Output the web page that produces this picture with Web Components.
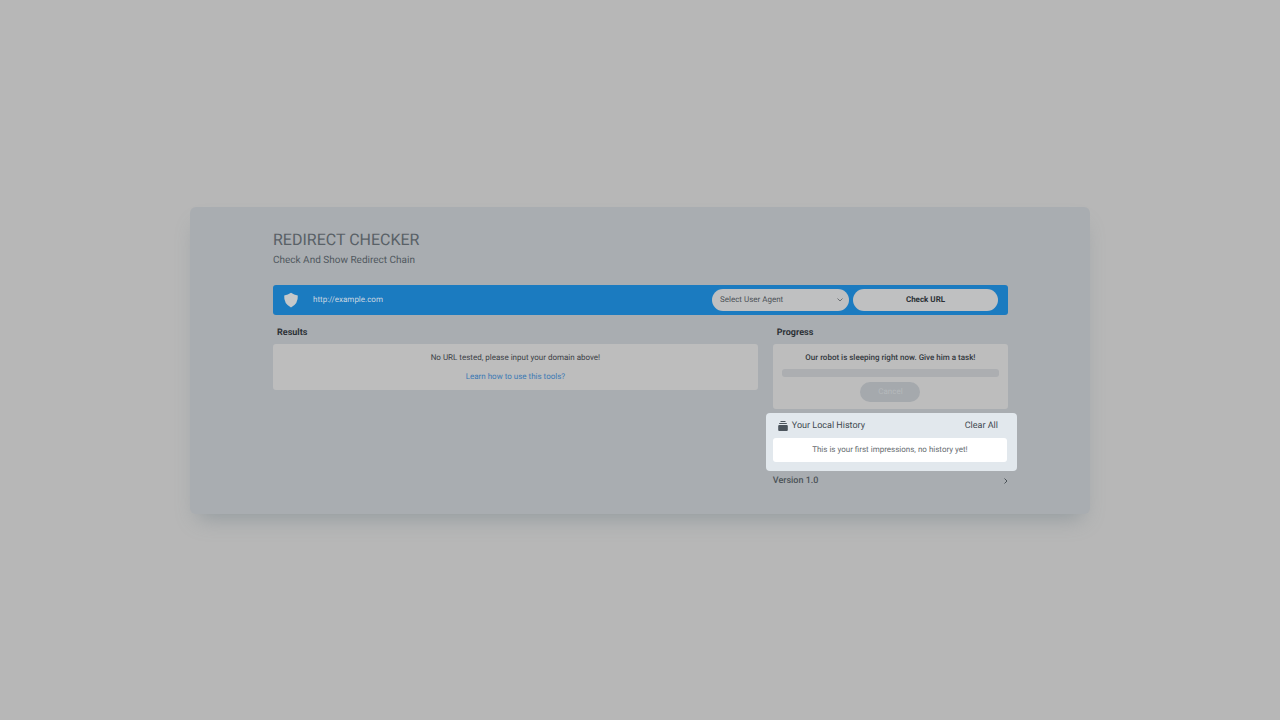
<!DOCTYPE html>
<html lang="en">
<head>
<meta charset="utf-8">
<meta name="viewport" content="width=device-width, initial-scale=1">
<title>Redirect Checker</title>
<style>
body {
  margin: 0;
  min-height: 100vh;
  display: grid;
  align-items: center;
  background: #b7b7b7;
  color: #3c4146;
  font: 8px/12px Roboto, sans-serif;
  text-rendering: geometricPrecision;
}
</style>
</head>
<body>
<redirect-checker></redirect-checker>

<script>
class BaseElement extends HTMLElement {
  constructor() {
    super();
    this.attachShadow({ mode: 'open' });
    this.shadowRoot.innerHTML = `<style>* { box-sizing: border-box; }${this.constructor.css}</style>${this.constructor.html}`;
  }
}

class UrlBar extends BaseElement {
  static css = `
:host {
  display: block;
}
form {
  display: flex;
  align-items: center;
  gap: 4px;
  height: 30px;
  padding: 0 10px;
  border-radius: 3px;
  background: #1b7bc0;
}
.url {
  flex: 1;
  display: flex;
  align-items: center;
  gap: 14px;
}
svg {
  display: block;
}
input, select, button {
  margin: 0;
  border: 0;
  outline: 0;
  font: inherit;
  text-rendering: inherit;
}
input {
  flex: 1;
  padding: 0;
  background: none;
  color: #c9d6e0;
}
input::placeholder {
  color: #c9d6e0;
}
.agent {
  position: relative;
  width: 137px;
}
.agent svg {
  position: absolute;
  right: 6px;
  top: 8px;
  pointer-events: none;
}
select, button {
  display: block;
  width: 100%;
  height: 22px;
  border-radius: 11px;
  background: #bfc0c1;
}
select {
  appearance: none;
  padding: 0 8px;
  color: #4d5257;
}
button {
  width: 145px;
  color: #2b3036;
  font-weight: 700;
}`;
  static html = `
<form onsubmit="return false">
  <label class="url">
    <svg width="16" height="16" viewBox="0 0 16 16" aria-hidden="true"><path d="M8 .8Q11 3 14.800 3.400Q15.400 11.500 8 15.400Q.6 11.500 1.200 3.400Q5 3 8 .8Z" fill="#c5c8ca"/></svg>
    <input type="text" placeholder="http://example.com" aria-label="URL" spellcheck="false">
  </label>
  <div class="agent">
    <select aria-label="User agent"><option>Select User Agent</option></select>
    <svg width="6" height="6" viewBox="0 0 6 6" aria-hidden="true"><path d="M.5 1.500L3 4L5.500 1.500" fill="none" stroke="#555a5f" stroke-width=".8"/></svg>
  </div>
  <button type="submit">Check URL</button>
</form>`;
}
customElements.define('url-bar', UrlBar);

class TitledCard extends BaseElement {
  static css = `
:host {
  display: block;
}
h2 {
  margin: 0 0 4px;
  padding: 0 4px;
  color: #2d3237;
  font-size: 9px;
  line-height: 14px;
  font-weight: 700;
}
.card {
  padding: 8px 9px 7px;
  border-radius: 3px;
  background: #bdbdbd;
  text-align: center;
}`;
  static html = `
<h2><slot name="title"></slot></h2>
<div class="card"><slot></slot></div>`;
}
customElements.define('titled-card', TitledCard);

class TaskProgress extends BaseElement {
  static css = `
:host {
  display: grid;
  justify-items: center;
}
p {
  margin: 0 0 5px;
  font-weight: 500;
  color: #33383d;
}
progress {
  appearance: none;
  display: block;
  width: 100%;
  height: 8px;
  margin-bottom: 5px;
  border: 0;
  border-radius: 3px;
  overflow: hidden;
}
progress::-webkit-progress-bar {
  background: #acaeb1;
}
progress::-webkit-progress-value {
  background: #1b7bc0;
}
button {
  width: 60px;
  height: 20px;
  padding: 0;
  border: 0;
  border-radius: 10px;
  background: #a5a9ad;
  color: #b5b9bc;
  font: inherit;
  text-rendering: inherit;
}`;
  static html = `
<p id="status">Our robot is sleeping right now. Give him a task!</p>
<progress value="0" max="100" aria-labelledby="status"></progress>
<button type="button" disabled>Cancel</button>`;
}
customElements.define('task-progress', TaskProgress);

class LocalHistory extends BaseElement {
  static css = `
:host {
  display: block;
  padding: 6px 10px 9px 7px;
  border-radius: 4px;
  background: #e2e8ed;
}
header {
  display: flex;
  align-items: center;
  gap: 4px;
  margin-bottom: 5px;
  padding: 0 9px 0 5px;
  color: #3f484f;
}
h2 {
  flex: 1;
  margin: 0;
  font-size: 9px;
  line-height: 14px;
  font-weight: 400;
}
button {
  padding: 0;
  border: 0;
  background: none;
  color: inherit;
  font: inherit;
  font-size: 9px;
  line-height: 14px;
  text-rendering: inherit;
}
.card {
  padding: 6px;
  border-radius: 3px;
  background: #ffffff;
  color: #666b70;
  text-align: center;
}`;
  static html = `
<header>
  <svg width="10" height="10" viewBox="0 0 10 10" fill="#4c555d" aria-hidden="true"><path d="M2.500 0H7.500V1H2.500ZM1.200 1.900H8.800V3.100H1.200ZM1.200 4H8.800Q9.800 4 9.800 5V9Q9.800 10 8.800 10H1.200Q.2 10 .2 9V5Q.2 4 1.200 4Z"/></svg>
  <h2>Your Local History</h2>
  <button type="button">Clear All</button>
</header>
<div class="card"><slot></slot></div>`;
}
customElements.define('local-history', LocalHistory);

class RedirectChecker extends BaseElement {
  static css = `
:host {
  display: block;
  width: 100%;
  max-width: 900px;
  margin: 0 auto;
  padding: 24px 82px 26px 83px;
  box-sizing: border-box;
  border-radius: 6px;
  background: #a9adb1;
  box-shadow: 0 12px 20px -8px #929a9e;
}
h1 {
  margin: 0;
  color: #596167;
  font-size: 16px;
  line-height: 18px;
  font-weight: 400;
}
.subtitle {
  margin: 5px 0 17px;
  color: #50585e;
  font-size: 10px;
  line-height: 14px;
}
.columns {
  display: grid;
  grid-template-columns: 1fr 32%;
  align-items: start;
  gap: 15px;
  margin-top: 11px;
}
.results {
  display: grid;
  gap: 7px;
}
a {
  color: #3b79b4;
  text-decoration: none;
}
local-history {
  margin: 4px -9px 3px -7px;
}
.version {
  display: flex;
  align-items: center;
  justify-content: space-between;
  width: 100%;
  padding: 0;
  border: 0;
  background: none;
  color: #4c5358;
  font: inherit;
  font-size: 9px;
  font-weight: 500;
  line-height: 14px;
  text-rendering: inherit;
}`;
  static html = `
<h1>REDIRECT CHECKER</h1>
<p class="subtitle">Check And Show Redirect Chain</p>
<url-bar></url-bar>
<div class="columns">
  <titled-card>
    <span slot="title">Results</span>
    <div class="results">
      <span>No URL tested, please input your domain above!</span>
      <a href="#help">Learn how to use this tools?</a>
    </div>
  </titled-card>
  <aside>
    <titled-card>
      <span slot="title">Progress</span>
      <task-progress></task-progress>
    </titled-card>
    <local-history>This is your first impressions, no history yet!</local-history>
    <button class="version" type="button">
      Version 1.0
      <svg width="5" height="6" viewBox="0 0 5 6" aria-hidden="true"><path d="M1.500 .5L4 3L1.500 5.500" fill="none" stroke="#4c5358"/></svg>
    </button>
  </aside>
</div>`;
}
customElements.define('redirect-checker', RedirectChecker);
</script>
</body>
</html>
